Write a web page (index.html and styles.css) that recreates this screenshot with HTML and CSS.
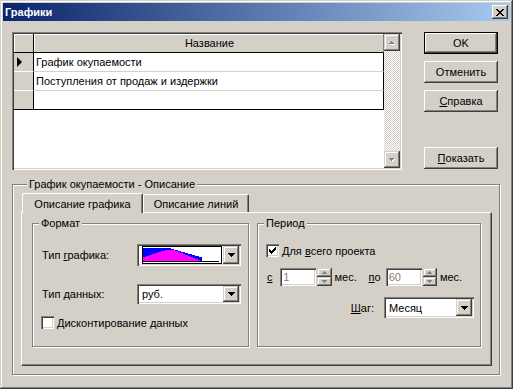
FILE: index.html
```html
<!DOCTYPE html>
<html lang="ru">
<head>
    <meta charset="UTF-8">
    <title>Графики</title>
    <link rel="stylesheet" href="styles.css">
</head>
<body>

<div class="window">
    <div class="titlebar">
        <span class="title">Графики</span>
        <div class="close-btn">
            <svg width="8" height="7" viewBox="0 0 8 7"><path d="M0 0h2v1h-2z M6 0h2v1h-2z M1 1h2v1h-2z M5 1h2v1h-2z M2 2h4v1h-4z M3 3h2v1h-2z M2 4h4v1h-4z M1 5h2v1h-2z M5 5h2v1h-2z M0 6h2v1h-2z M6 6h2v1h-2z" fill="#000"/></svg>
        </div>
    </div>

    <div class="dialog">
        <!-- list of charts + buttons -->
        <div class="top">
            <div class="grid">
                <div class="grid-data">
                    <div class="grid-row grid-head">
                        <div class="ind"></div>
                        <div class="cell">Название</div>
                    </div>
                    <div class="grid-row">
                        <div class="ind"><span class="pointer"></span></div>
                        <div class="cell">График окупаемости</div>
                    </div>
                    <div class="grid-row">
                        <div class="ind"></div>
                        <div class="cell">Поступления от продаж и издержки</div>
                    </div>
                    <div class="grid-row last">
                        <div class="ind"></div>
                        <div class="cell"></div>
                    </div>
                </div>
                <div class="scrollbar">
                    <div class="sb-btn">
                        <svg width="6" height="4" viewBox="0 0 6 4"><path d="M3 1h1v1h1v1h1v1h-5v-1h1v-1h1z" fill="#fff"/><path d="M2 0h1v1h1v1h1v1h-5v-1h1v-1h1z" fill="#808080"/></svg>
                    </div>
                    <div class="sb-track"></div>
                    <div class="sb-btn">
                        <svg width="6" height="4" viewBox="0 0 6 4"><path d="M1 1h5v1h-1v1h-1v1h-1v-1h-1v-1h-1z" fill="#fff"/><path d="M0 0h5v1h-1v1h-1v1h-1v-1h-1v-1h-1z" fill="#808080"/></svg>
                    </div>
                </div>
            </div>

            <div class="buttons">
                <div class="btn default">OK</div>
                <div class="btn">Отменить</div>
                <div class="btn"><u>С</u>правка</div>
                <div class="btn btn-show"><u>П</u>оказать</div>
            </div>
        </div>

        <!-- description of selected chart -->
        <div class="group outer-group">
            <div class="legend">График окупаемости - Описание</div>
            <div class="tabs">
                <div class="tab active">Описание графика</div>
                <div class="tab second">Описание линий</div>
            </div>
            <div class="tab-page">
                <div class="group format">
                    <div class="legend">Формат</div>
                    <div class="group-body">
                        <div class="field-row row-chart">
                            <span class="field-label">Тип <u>г</u>рафика:</span>
                            <div class="combo combo-chart">
                                <div class="chart-pic">
                                    <svg width="78" height="16" viewBox="0 0 78 16" shape-rendering="crispEdges">
                                        <path d="M0 14V1H28V2H31V3H35V4H38V5H42V6H45V7H49V8H52V9H56V10H59V14Z" fill="#0000ff"/>
                                        <path d="M0 14V10H3V9H6V8H9V7H12V6H15V5H18V4H22V3H32V4H35V5H37V6H40V7H42V8H45V9H47V10H50V11H52V12H55V13H57V14Z" fill="#ff00ff"/>
                                        <path d="M0 14h76v1h-76z" fill="#000"/>
                                    </svg>
                                </div>
                                <div class="combo-btn"><svg width="7" height="4" viewBox="0 0 7 4"><path d="M0 0h7v1h-1v1h-1v1h-1v1h-1v-1h-1v-1h-1v-1h-1z" fill="#000"/></svg></div>
                            </div>
                        </div>
                        <div class="field-row row-data">
                            <span class="field-label">Тип <u>д</u>анных:</span>
                            <div class="combo combo-small">
                                <span class="combo-text">руб.</span>
                                <div class="combo-btn"><svg width="7" height="4" viewBox="0 0 7 4"><path d="M0 0h7v1h-1v1h-1v1h-1v1h-1v-1h-1v-1h-1v-1h-1z" fill="#000"/></svg></div>
                            </div>
                        </div>
                        <div class="check-row row-discount">
                            <span class="check"></span>
                            <span><u>Д</u>исконтирование данных</span>
                        </div>
                    </div>
                </div>

                <div class="group period">
                    <div class="legend">Период</div>
                    <div class="group-body">
                        <div class="check-row row-whole">
                            <span class="check">
                                <svg width="7" height="7" viewBox="0 0 7 7"><path d="M0 2h1v3h-1z M1 3h1v3h-1z M2 4h1v3h-1z M3 3h1v3h-1z M4 2h1v3h-1z M5 1h1v3h-1z M6 0h1v3h-1z" fill="#000"/></svg>
                            </span>
                            <span>Для <u>в</u>сего проекта</span>
                        </div>
                        <div class="range-row">
                            <span class="range-from"><u>с</u></span>
                            <span class="num">1</span>
                            <div class="spin">
                                <div class="spin-half"><svg width="5" height="3" viewBox="0 0 5 3"><path d="M2 0h1v1h1v1h1v1h-5v-1h1v-1h1z" fill="#808080"/></svg></div>
                                <div class="spin-half"><svg width="5" height="3" viewBox="0 0 5 3"><path d="M0 0h5v1h-1v1h-1v1h-1v-1h-1v-1h-1z" fill="#808080"/></svg></div>
                            </div>
                            <span class="unit">мес.</span>
                            <span class="range-to"><u>п</u>о</span>
                            <span class="num">60</span>
                            <div class="spin">
                                <div class="spin-half"><svg width="5" height="3" viewBox="0 0 5 3"><path d="M2 0h1v1h1v1h1v1h-5v-1h1v-1h1z" fill="#808080"/></svg></div>
                                <div class="spin-half"><svg width="5" height="3" viewBox="0 0 5 3"><path d="M0 0h5v1h-1v1h-1v1h-1v-1h-1v-1h-1z" fill="#808080"/></svg></div>
                            </div>
                            <span class="unit">мес.</span>
                        </div>
                        <div class="step-row">
                            <span class="step-label"><u>Ш</u>аг:</span>
                            <div class="combo combo-step">
                                <span class="combo-text">Месяц</span>
                                <div class="combo-btn"><svg width="7" height="4" viewBox="0 0 7 4"><path d="M0 0h7v1h-1v1h-1v1h-1v1h-1v-1h-1v-1h-1v-1h-1z" fill="#000"/></svg></div>
                            </div>
                        </div>
                    </div>
                </div>
            </div>
        </div>
    </div>
</div>

</body>
</html>
```

FILE: styles.css
```css
body {
    margin: 0;
    font-family: "Liberation Sans", Arial, sans-serif;
    font-size: 11px;
    color: #000;
    background-color: #d4d0c8;
}
u {
    text-decoration: underline;
    text-underline-offset: 1px;
}
.window {
    width: 513px;
    height: 389px;
    box-sizing: border-box;
    padding: 3px;
    background: #d4d0c8;
    box-shadow: inset -1px -1px #404040, inset 1px 1px #d4d0c8, inset -2px -2px #808080, inset 2px 2px #fff;
}
.titlebar {
    height: 18px;
    display: flex;
    align-items: center;
    justify-content: space-between;
    padding: 0 2px;
    background: linear-gradient(to right, #0a246a, #a6caf0);
    color: #fff;
    font-weight: bold;
}
.close-btn {
    width: 16px;
    height: 14px;
    display: flex;
    align-items: center;
    justify-content: center;
    background: #d4d0c8;
    box-shadow: inset -1px -1px #404040, inset 1px 1px #fff, inset -2px -2px #808080, inset 2px 2px #d4d0c8;
}
.dialog {
    padding: 11px 0 0 9px;
}

/* grid */
.top {
    display: flex;
}
.grid {
    width: 390px;
    height: 138px;
    box-sizing: border-box;
    padding: 2px;
    display: flex;
    background: #fff;
    box-shadow: inset 1px 1px #808080, inset 2px 2px #404040, inset -1px -1px #fff, inset -2px -2px #d4d0c8;
}
.grid-data {
    width: 370px;
}
.grid-row {
    display: flex;
    height: 19px;
}
.ind {
    width: 20px;
    box-sizing: border-box;
    display: flex;
    align-items: center;
    padding-left: 3px;
    background: #d4d0c8;
    border-right: 1px solid #000;
    border-bottom: 1px solid #fff;
}
.cell {
    width: 350px;
    box-sizing: border-box;
    padding-left: 2px;
    line-height: 18px;
    white-space: nowrap;
    border-right: 1px solid #000;
    border-bottom: 1px solid #d4d0c8;
}
.grid-head .ind,
.grid-head .cell {
    background: #d4d0c8;
    border-bottom-color: #000;
    box-shadow: inset 1px 1px #fff;
}
.grid-head .cell {
    text-align: center;
    border-right-color: #808080;
}
.last .ind,
.last .cell {
    border-bottom-color: #000;
}
.pointer {
    width: 0;
    height: 0;
    border-left: 5px solid #000;
    border-top: 5px solid transparent;
    border-bottom: 5px solid transparent;
}
.scrollbar {
    width: 16px;
    display: flex;
    flex-direction: column;
}
.sb-btn {
    height: 17px;
    display: flex;
    align-items: center;
    justify-content: center;
    background: #d4d0c8;
    box-shadow: inset -1px -1px #404040, inset 1px 1px #d4d0c8, inset -2px -2px #808080, inset 2px 2px #fff;
}
.sb-track {
    flex: 1;
    background-image: conic-gradient(#d4d0c8 25%, #fff 0 50%, #d4d0c8 0 75%, #fff 0);
    background-size: 2px 2px;
}

/* buttons */
.buttons {
    height: 138px;
    margin-left: 22px;
    display: flex;
    flex-direction: column;
    gap: 7px;
}
.btn {
    width: 74px;
    height: 22px;
    display: flex;
    align-items: center;
    justify-content: center;
    background: #d4d0c8;
    box-shadow: inset -1px -1px #404040, inset 1px 1px #fff, inset -2px -2px #808080, inset 2px 2px #d4d0c8;
}
.btn.default {
    box-shadow: inset 0 0 0 1px #000, inset -2px -2px #404040, inset 2px 2px #fff, inset -3px -3px #808080;
}
.btn-show {
    margin-top: auto;
    margin-bottom: 1px;
}

/* group boxes */
.group {
    box-sizing: border-box;
    border: 1px solid #808080;
    box-shadow: inset 1px 1px #fff, 1px 1px #fff;
}
.legend {
    width: fit-content;
    height: 13px;
    line-height: 13px;
    margin: -7px 0 0 6px;
    padding: 0 2px;
    background: #d4d0c8;
    white-space: nowrap;
}
.outer-group {
    width: 488px;
    height: 191px;
    margin-top: 14px;
    padding: 0 7px 0 8px;
}

/* tabs */
.tabs {
    display: flex;
    align-items: flex-end;
    margin-top: 2px;
}
.tab {
    height: 18px;
    box-sizing: border-box;
    display: flex;
    align-items: center;
    justify-content: center;
    border-top: 1px solid #fff;
    border-left: 1px solid #fff;
    border-right: 1px solid #404040;
    border-radius: 2px 2px 0 0;
    box-shadow: inset -1px 0 #808080;
    background: #d4d0c8;
}
.tab.active {
    width: 121px;
    height: 20px;
    margin-left: 1px;
    margin-bottom: -1px;
    position: relative;
    z-index: 1;
}
.tab.second {
    width: 106px;
}
.tab-page {
    height: 154px;
    box-sizing: border-box;
    display: flex;
    align-items: flex-start;
    gap: 8px;
    padding: 10px 0 0 10px;
    border-top: 1px solid #fff;
    border-left: 1px solid #fff;
    border-right: 1px solid #404040;
    border-bottom: 1px solid #404040;
    box-shadow: inset -1px -1px #808080;
}
.format {
    width: 217px;
    height: 124px;
}
.period {
    width: 224px;
    height: 124px;
}
.group-body {
    padding: 0 6px 0 8px;
}

/* fields */
.field-row {
    display: flex;
    align-items: center;
}
.field-label {
    width: 96px;
    padding-left: 1px;
    box-sizing: border-box;
}
.row-chart {
    margin-top: 14px;
}
.row-data {
    margin-top: 18px;
}
.combo {
    box-sizing: border-box;
    padding: 2px;
    display: flex;
    background: #fff;
    box-shadow: inset 1px 1px #808080, inset 2px 2px #404040, inset -1px -1px #fff, inset -2px -2px #d4d0c8;
}
.combo-chart {
    width: 104px;
    height: 22px;
}
.combo-small {
    width: 104px;
    height: 20px;
}
.combo-step {
    width: 90px;
    height: 21px;
}
.combo-text {
    flex: 1;
    padding-left: 3px;
    display: flex;
    align-items: center;
}
.combo-btn {
    width: 16px;
    display: flex;
    align-items: center;
    justify-content: center;
    background: #d4d0c8;
    box-shadow: inset -1px -1px #404040, inset 1px 1px #d4d0c8, inset -2px -2px #808080, inset 2px 2px #fff;
}
.chart-pic {
    width: 80px;
    box-sizing: border-box;
    margin: 0 1px 0 3px;
    border: 1px solid #000;
    display: flex;
}
.chart-pic svg {
    display: block;
}
.check-row {
    display: flex;
    align-items: center;
    gap: 3px;
    height: 13px;
}
.check {
    width: 13px;
    height: 13px;
    box-sizing: border-box;
    display: flex;
    align-items: center;
    justify-content: center;
    background: #fff;
    box-shadow: inset 1px 1px #808080, inset 2px 2px #404040, inset -1px -1px #fff, inset -2px -2px #d4d0c8;
}
.row-discount {
    margin-top: 12px;
}
.row-whole {
    margin-top: 14px;
}
.range-row {
    display: flex;
    align-items: center;
    height: 18px;
    margin-top: 11px;
}
.range-from {
    width: 15px;
    padding-left: 1px;
    box-sizing: border-box;
}
.range-to {
    width: 18px;
}
.num {
    width: 38px;
    height: 18px;
    box-sizing: border-box;
    padding-left: 3px;
    line-height: 18px;
    color: #808080;
    background: #fff;
    box-shadow: inset 1px 1px #808080, inset 2px 2px #404040, inset -1px -1px #fff, inset -2px -2px #d4d0c8;
}
.spin {
    width: 15px;
    height: 18px;
    margin-left: 1px;
    display: flex;
    flex-direction: column;
}
.spin-half {
    flex: 1;
    display: flex;
    align-items: center;
    justify-content: center;
    background: #d4d0c8;
    box-shadow: inset -1px -1px #404040, inset 1px 1px #d4d0c8, inset -2px -2px #808080, inset 2px 2px #fff;
}
.unit {
    width: 39px;
    padding-left: 3px;
    box-sizing: border-box;
}
.step-row {
    display: flex;
    align-items: center;
    justify-content: flex-end;
    margin-top: 11px;
}
.step-label {
    margin-right: 10px;
}
```
